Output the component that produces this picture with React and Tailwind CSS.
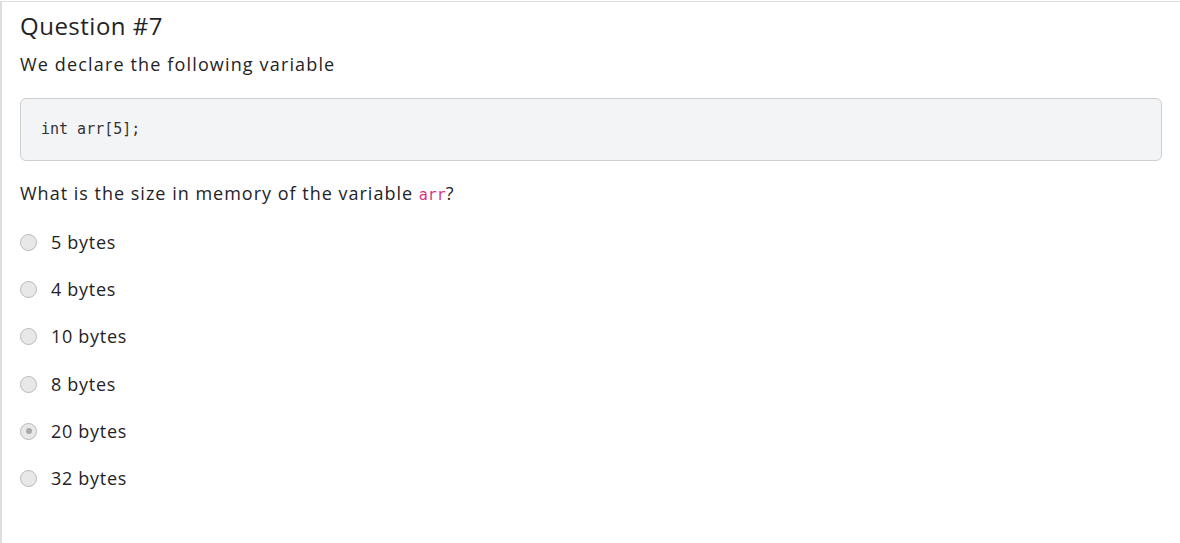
const OPTIONS = [
  { label: "5 bytes" },
  { label: "4 bytes" },
  { label: "10 bytes" },
  { label: "8 bytes" },
  { label: "20 bytes", checked: true },
  { label: "32 bytes" },
];

function Radio({ checked }) {
  return (
    <span className="flex h-[17px] w-[17px] flex-shrink-0 items-center justify-center rounded-full border border-[#b9b9b9] bg-[#e8e8e8]">
      {checked && <span className="h-[6px] w-[6px] rounded-full bg-[#a9a9a9]" />}
    </span>
  );
}

export default function App() {
  return (
    <div className="h-[543px] w-[1180px] bg-white pt-px" style={{ fontFamily: "'Open Sans', sans-serif" }}>
      <div className="h-full border-l-2 border-t border-[#dedede] pl-[18px] pr-[18px] text-[#1f2327]">
        <h2 className="mt-[9px] text-[24px] leading-[29px] font-medium tracking-[0.5px]">Question #7</h2>
        <p className="mt-[11px] text-[18px] leading-[27px] tracking-[1.15px]">We declare the following variable</p>

        <div className="mt-[20px] flex h-[63px] items-center rounded-md border border-[#cfcfcf] bg-[#f3f4f6] px-5">
          <code className="text-[15px] text-[#333]" style={{ fontFamily: "'DejaVu Sans Mono', monospace" }}>
            int arr[5];
          </code>
        </div>

        <p className="mt-[19px] text-[18px] leading-[27px] tracking-[1px]">
          What is the size in memory of the variable{" "}
          <code className="text-[15px] tracking-normal text-[#d63384]" style={{ fontFamily: "'DejaVu Sans Mono', monospace" }}>
            arr
          </code>
          ?
        </p>

        <div className="mt-[20px] flex flex-col gap-[20.2px]">
          {OPTIONS.map((o) => (
            <label key={o.label} className="flex h-[27px] items-center gap-[14px]">
              <Radio checked={o.checked} />
              <span className="text-[18px] leading-[27px] tracking-[0.7px]">{o.label}</span>
            </label>
          ))}
        </div>
      </div>
    </div>
  );
}
